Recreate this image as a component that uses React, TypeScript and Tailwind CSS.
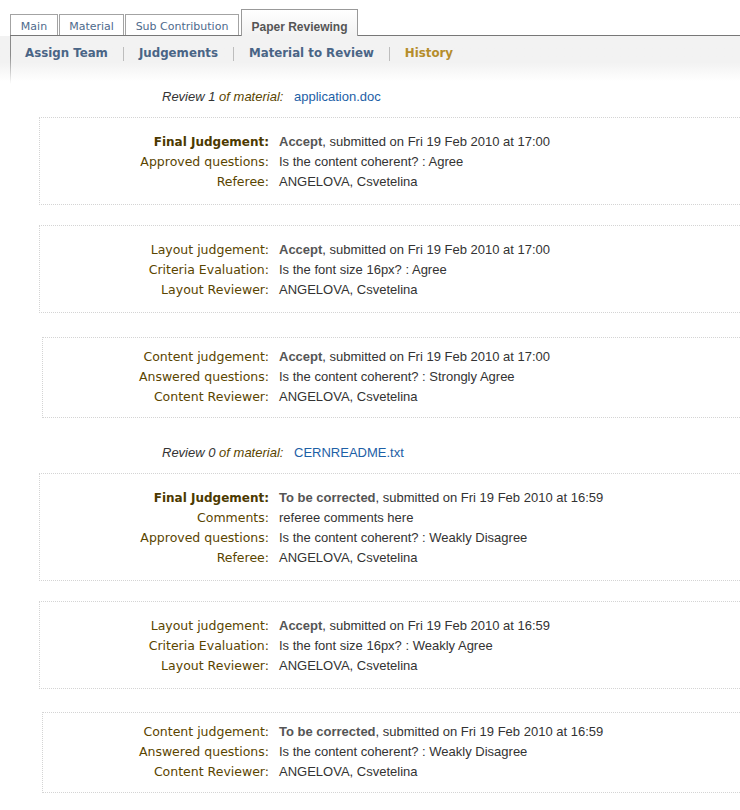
import React from 'react';
import clsx from 'clsx';

// Paper reviewing history page: tab strip, sub navigation and one block
// per reviewed material with the judgements that were submitted for it.

interface Row {
  label: string;
  strongLabel?: boolean;
  strong?: string;
  text: string;
}

interface Box {
  narrow?: boolean;
  mt: string;
  rows: Row[];
}

interface Review {
  title: string;
  file: string;
  mt: string;
  boxes: Box[];
}

const referee = 'ANGELOVA, Csvetelina';

const reviews: Review[] = [
  {
    title: 'Review 1',
    file: 'application.doc',
    mt: 'mt-[3px]',
    boxes: [
      {
        mt: 'mt-[10px]',
        rows: [
          { label: 'Final Judgement:', strongLabel: true, strong: 'Accept', text: ', submitted on Fri 19 Feb 2010 at 17:00' },
          { label: 'Approved questions:', text: 'Is the content coherent? : Agree' },
          { label: 'Referee:', text: referee },
        ],
      },
      {
        mt: 'mt-[20px]',
        rows: [
          { label: 'Layout judgement:', strong: 'Accept', text: ', submitted on Fri 19 Feb 2010 at 17:00' },
          { label: 'Criteria Evaluation:', text: 'Is the font size 16px? : Agree' },
          { label: 'Layout Reviewer:', text: referee },
        ],
      },
      {
        narrow: true,
        mt: 'mt-[24px]',
        rows: [
          { label: 'Content judgement:', strong: 'Accept', text: ', submitted on Fri 19 Feb 2010 at 17:00' },
          { label: 'Answered questions:', text: 'Is the content coherent? : Strongly Agree' },
          { label: 'Content Reviewer:', text: referee },
        ],
      },
    ],
  },
  {
    title: 'Review 0',
    file: 'CERNREADME.txt',
    mt: 'mt-[25px]',
    boxes: [
      {
        mt: 'mt-[10px]',
        rows: [
          { label: 'Final Judgement:', strongLabel: true, strong: 'To be corrected', text: ', submitted on Fri 19 Feb 2010 at 16:59' },
          { label: 'Comments:', text: 'referee comments here' },
          { label: 'Approved questions:', text: 'Is the content coherent? : Weakly Disagree' },
          { label: 'Referee:', text: referee },
        ],
      },
      {
        mt: 'mt-[20px]',
        rows: [
          { label: 'Layout judgement:', strong: 'Accept', text: ', submitted on Fri 19 Feb 2010 at 16:59' },
          { label: 'Criteria Evaluation:', text: 'Is the font size 16px? : Weakly Agree' },
          { label: 'Layout Reviewer:', text: referee },
        ],
      },
      {
        narrow: true,
        mt: 'mt-[23px]',
        rows: [
          { label: 'Content judgement:', strong: 'To be corrected', text: ', submitted on Fri 19 Feb 2010 at 16:59' },
          { label: 'Answered questions:', text: 'Is the content coherent? : Weakly Disagree' },
          { label: 'Content Reviewer:', text: referee },
        ],
      },
    ],
  },
];

const tabs = [
  { label: 'Main', width: 'w-[48px]' },
  { label: 'Material', width: 'w-[65px]' },
  { label: 'Sub Contribution', width: 'w-[114px]' },
];

const subnav = ['Assign Team', 'Judgements', 'Material to Review'];

function Tabs() {
  return (
    <div className="ml-[10px] flex items-end gap-px border-b border-[#777] pt-[9px] font-['DejaVu_Sans',sans-serif] text-[11px]">
      {tabs.map((tab) => (
        <div
          key={tab.label}
          className={clsx(
            'h-[21px] border border-b-0 border-[#a3a3a3] bg-white pt-[3px] text-center leading-[18px] text-[#4e6a8c]',
            tab.width,
          )}
        >
          {tab.label}
        </div>
      ))}
      <div className="-mb-px ml-px h-[27px] w-[117px] border border-b-0 border-[#999] bg-linear-to-b from-white to-[#f2f2f2] pt-[8px] text-center font-['Liberation_Sans',sans-serif] text-[12px] font-bold leading-[18px] text-[#555]">
        Paper Reviewing
      </div>
    </div>
  );
}

function SubNav() {
  return (
    <div className="flex h-[48px] bg-linear-to-b from-[#f2f2f2] from-55% to-white to-95% pl-[10px]">
      <div className="w-px bg-linear-to-b from-[#8a8a8a] from-40% to-white" />
      <div className="flex items-start pl-[14px] pt-[10px] font-['DejaVu_Sans',sans-serif] text-[11.8px] font-bold leading-[15px]">
        {subnav.map((item) => (
          <React.Fragment key={item}>
            <span className="text-[#4a6586]">{item}</span>
            <span className="mx-[15px] mt-px h-[14px] w-px bg-[#bdbdbd]" />
          </React.Fragment>
        ))}
        <span className="text-[#b58d2b]">History</span>
      </div>
    </div>
  );
}

function JudgementBox({ box }: { box: Box }) {
  return (
    <div
      className={clsx(
        'mr-[-40px] border border-dotted border-[#d4d4d4]',
        box.mt,
        box.narrow ? 'ml-[42px] pt-[9px] pb-[10px]' : 'ml-[39px] pt-[14px] pb-[12px]',
      )}
    >
      <div
        className={clsx(
          'grid items-baseline gap-x-[10px]',
          box.narrow ? 'grid-cols-[226px_1fr]' : 'grid-cols-[229px_1fr]',
        )}
      >
        {box.rows.map((row) => (
          <React.Fragment key={row.label}>
            <div
              className={clsx(
                "text-right font-['DejaVu_Sans',sans-serif] leading-[20px]",
                row.strongLabel ? 'text-[12px] font-bold text-[#4c3a00]' : 'text-[12.5px] text-[#5a4500]',
              )}
            >
              {row.label}
            </div>
            <div className="font-['Liberation_Sans',sans-serif] text-[13px] leading-[20px] text-[#333]">
              {row.strong ? <span className="font-bold text-[#555]">{row.strong}</span> : null}
              {row.text}
            </div>
          </React.Fragment>
        ))}
      </div>
    </div>
  );
}

export default function App() {
  return (
    <div className="min-h-[810px] w-[740px] overflow-hidden bg-white pb-4">
      <Tabs />
      <SubNav />
      {reviews.map((review) => (
        <section key={review.title}>
          <div
            className={clsx(
              "ml-[162px] flex h-[20px] font-['Liberation_Sans',sans-serif] text-[13px] leading-[20px]",
              review.mt,
            )}
          >
            <span className="w-[132px] italic">
              <span className="text-[#333]">{review.title}</span>{' '}
              <span className="text-[#5a4500]">of material:</span>
            </span>
            <a href="#" className="text-[#1d60a6]">
              {review.file}
            </a>
          </div>
          {review.boxes.map((box, i) => (
            <JudgementBox key={i} box={box} />
          ))}
        </section>
      ))}
    </div>
  );
}
